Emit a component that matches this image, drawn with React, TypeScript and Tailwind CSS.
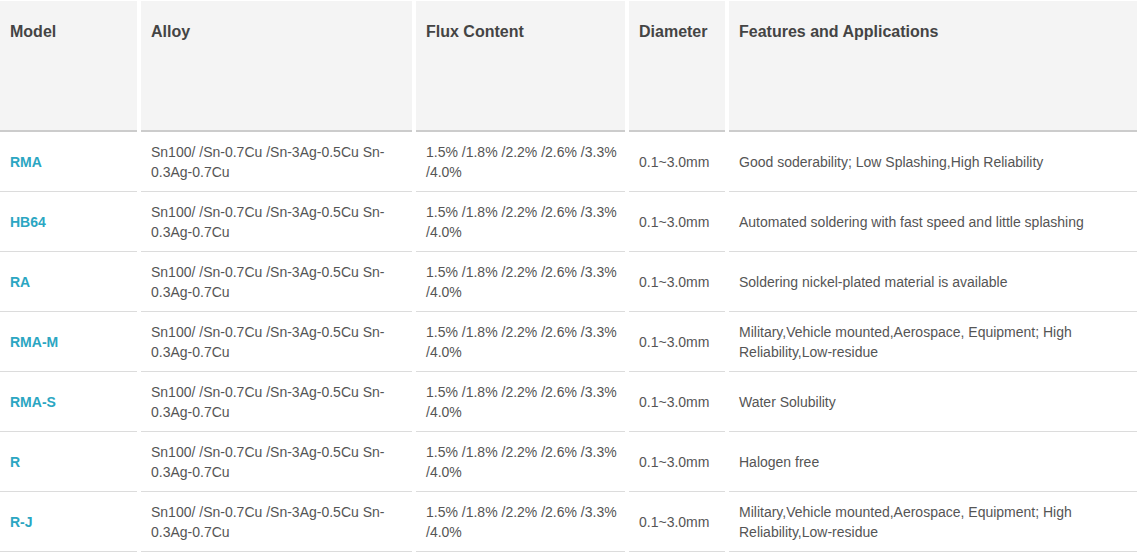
import React from 'react';

interface SolderRow {
  model: string;
  alloy: string;
  flux: string;
  diameter: string;
  features: string;
}

const ALLOY = 'Sn100/ /Sn-0.7Cu /Sn-3Ag-0.5Cu Sn-0.3Ag-0.7Cu';
const FLUX = '1.5% /1.8% /2.2% /2.6% /3.3% /4.0%';
const DIAMETER = '0.1~3.0mm';

const ROWS: SolderRow[] = [
  { model: 'RMA', alloy: ALLOY, flux: FLUX, diameter: DIAMETER, features: 'Good soderability; Low Splashing,High Reliability' },
  { model: 'HB64', alloy: ALLOY, flux: FLUX, diameter: DIAMETER, features: 'Automated soldering with fast speed and little splashing' },
  { model: 'RA', alloy: ALLOY, flux: FLUX, diameter: DIAMETER, features: 'Soldering nickel-plated material is available' },
  { model: 'RMA-M', alloy: ALLOY, flux: FLUX, diameter: DIAMETER, features: 'Military,Vehicle mounted,Aerospace, Equipment; High Reliability,Low-residue' },
  { model: 'RMA-S', alloy: ALLOY, flux: FLUX, diameter: DIAMETER, features: 'Water Solubility' },
  { model: 'R', alloy: ALLOY, flux: FLUX, diameter: DIAMETER, features: 'Halogen free' },
  { model: 'R-J', alloy: ALLOY, flux: FLUX, diameter: DIAMETER, features: 'Military,Vehicle mounted,Aerospace, Equipment; High Reliability,Low-residue' },
];

const HEADERS = ['Model', 'Alloy', 'Flux Content', 'Diameter', 'Features and Applications'];

// column widths picked to match the reference (gap 4px between columns)
const GRID = 'grid grid-cols-[137px_271px_209px_96px_408px] gap-x-[4px]';

const BodyCell = ({ children, className = '' }: { children: React.ReactNode; className?: string }) => (
  <div className={`flex h-[60px] items-center border-b border-[#dcdcdc] pl-[10px] pr-[4px] text-[14px] leading-[20px] ${className}`}>
    <div>{children}</div>
  </div>
);

const App = () => {
  return (
    <div className="min-h-screen w-[1144px] bg-white pt-px font-['Liberation_Sans',Arial,sans-serif]">
      {/* header */}
      <div className={GRID}>
        {HEADERS.map((h) => (
          <div
            key={h}
            className="h-[131px] border-b-2 border-[#cccccc] bg-[#f4f4f4] pl-[10px] pr-[4px] pt-[19px] text-[16px] font-bold leading-[24px] text-[#444444]"
          >
            {h}
          </div>
        ))}
      </div>

      {/* rows */}
      {ROWS.map((row) => (
        <div key={row.model} className={GRID}>
          <BodyCell className="font-bold text-[#2ba6c2]">{row.model}</BodyCell>
          <BodyCell className="text-[#555555]">{row.alloy}</BodyCell>
          <BodyCell className="text-[#555555]">{row.flux}</BodyCell>
          <BodyCell className="text-[#555555]">{row.diameter}</BodyCell>
          <BodyCell className="text-[#555555]">{row.features}</BodyCell>
        </div>
      ))}
    </div>
  );
};

export default App;
